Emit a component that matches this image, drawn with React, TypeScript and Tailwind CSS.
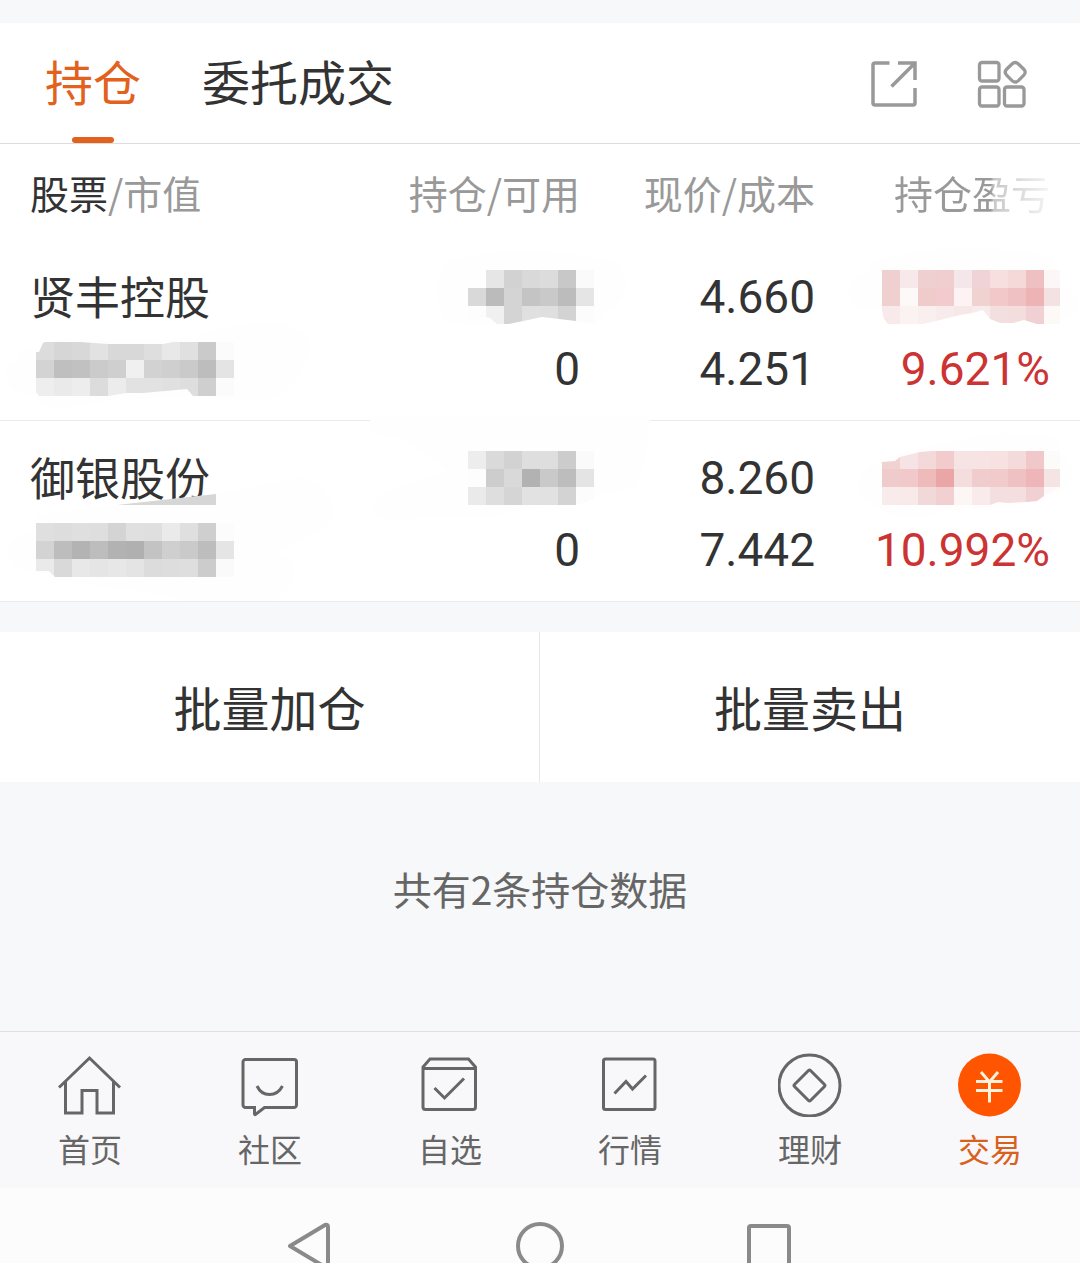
import clsx from "clsx";
import type { ReactNode } from "react";

type MosaicData = {
    cells: string[][];
    clip: string;
    halo: string;
    strip?: string;
};

type Holding = {
    name: string;
    price: string;
    cost: string;
    profit: string;
    value: MosaicData;
    amount: MosaicData;
    gain: MosaicData;
};

const grey = (row: string) => row.split(" ").map((c) => `#${c}${c}${c}`);
const tint = (row: string) => row.split(" ").map((c) => `#${c}`);

const holdings: Holding[] = [
    {
        name: "贤丰控股",
        price: "4.660",
        cost: "4.251",
        profit: "9.621%",
        value: {
            cells: [
                grey("dc d6 d8 e2 d8 d8 de e8 e0 ca fb"),
                grey("d3 bf c1 cb cf f0 d2 cf ca bd e4"),
                grey("ee ea ed dc ec e2 e2 e0 de cf fb"),
            ],
            clip: "0,10 3,10 7,1 9,0 44,0 72,2 127,2 137,0 198,0 198,54 157,54 151,47 107,51 91,51 72,54 3,54 0,50",
            halo: "M-18 10Q-10 4 0 10Q20 -8 50 -2L150 -2Q200 -22 248 -18Q290 -6 264 30Q250 64 200 58L150 54L60 60Q10 74 0 54Q-30 52 -30 32Q-30 20 -18 22Z",
        },
        amount: {
            cells: [
                grey("fe e6 d2 d9 dc c8 fa"),
                grey("d9 bb d4 c4 c9 bc e5"),
                grey("fd f0 d4 e0 df d3 fc"),
            ],
            clip: "0,0 126,0 126,54 108,51 74,47 41,54 29,54 22,48 18,47 0,50",
            halo: "M-20 -10Q60 -28 150 -8Q170 24 140 40L128 54L74 47L30 56L-24 52Q-40 10 -20 -10Z",
        },
        gain: {
            cells: [
                tint("efcfcf f7e8e9 f0cfd0 f0cdcf f5e6e9 f0d3d7 f7dfe0 f5d9d9 efc0c1 fcf7f6"),
                tint("f0cfcf fdf9f8 f0cbcc f1cbcd fdf3f4 f0d2d0 f2c8c9 f0c1c2 eeb3b5 f3e2e1"),
                tint("f8eaea fbf2f2 f9efef f8ebec f7e8e8 f8ebec f4dfe0 f4dddd f1d0d3 fcf9f7"),
            ],
            clip: "0,0 178,0 178,54 155,54 142,50 131,53 118,53 108,49 101,40 90,43 78,45 58,50 41,54 6,54 2,49 0,40",
            halo: "M-12 -6Q60 -34 168 -14L180 18Q200 20 196 40Q186 54 164 50L0 40Q-36 42 -34 18Q-30 4 -12 4Z",
        },
    },
    {
        name: "御银股份",
        price: "8.260",
        cost: "7.442",
        profit: "10.992%",
        value: {
            cells: [
                grey("df dd df de d4 e0 df ea df cf fc"),
                grey("d3 bd b3 bd b2 b0 c3 cf ca bd e5"),
                grey("ea d9 e8 e5 e7 e4 dc dd de cc fa"),
            ],
            clip: "0,0 198,0 198,54 19,54 13,48 0,48",
            halo: "M0 -8L180 -29L262 -45Q300 -40 296 0L240 30Q270 40 250 66Q244 76 236 78L150 78L140 74L20 56L0 50Q-30 46 -28 24Q-20 10 0 8Z",
            strip: "81,-18 180,-29 180,-18",
        },
        amount: {
            cells: [
                grey("ed da d2 de de cc fa"),
                grey("fd cd d9 b2 c9 bd e4"),
                grey("ea de d5 e2 e1 d3 fc"),
            ],
            clip: "0,0 126,0 126,48 108,54 0,54",
            halo: "M-98 -36L182 -36L180 -10L170 36L20 66L-80 68Q-110 60 -80 40L-20 20L-60 -10L-98 -18Z",
        },
        gain: {
            cells: [
                tint("f0d2d0 f6e3e6 f3d9d9 f2cbcd f6e3e3 f7e3e3 f7e1e1 f3dbdc f0c8ca fdfbfa"),
                tint("f0cbcb f2c9ca eebaba eaa5a7 f3dddd f1cccd f1cacb f0c1c2 eeb6b8 f4e4e4"),
                tint("f8ebeb f9eaea f1d9da f2cfd1 fcf7f4 f9ebeb f4dee0 f4dedf f1d0d3 fcf9f8"),
            ],
            clip: "0,11 13,10 18,6 38,1 50,0 178,0 178,36 162,45 155,50 145,51 126,52 116,51 108,54 0,54",
            halo: "M0 8Q70 -12 120 -18L174 -14L180 4Q200 20 180 40L140 54L60 60Q20 74 -6 56Q-30 44 -22 26Q-14 12 0 10Z",
        },
    },
];

function Mosaic({ id, data, width }: { id: string; data: MosaicData; width: number }) {
    return (
        <svg width={width} height="54" className="block shrink-0 overflow-visible" aria-hidden="true">
            <clipPath id={id}>
                <polygon points={data.clip} />
            </clipPath>
            <path d={data.halo} fill="#fefefe" />
            {data.strip && <polygon points={data.strip} fill="#d6d6d6" />}
            <g clipPath={`url(#${id})`} shapeRendering="crispEdges">
                {data.cells.map((row, y) =>
                    row.map((fill, x) => (
                        <rect key={`${x}-${y}`} x={x * 18} y={y * 18} width="18" height="18" fill={fill} />
                    ))
                )}
            </g>
        </svg>
    );
}

function Line({ children, right }: { children: ReactNode; right?: boolean }) {
    return <div className={clsx("h-[72px] flex items-center", right && "justify-end")}>{children}</div>;
}

const navItems = [
    {
        label: "首页",
        icon: (
            <>
                <path d="M1 34.5 31.5 5 62 34.5" />
                <path d="M7.5 29V60H24V37.5H39V60H55.5V29" />
            </>
        ),
    },
    {
        label: "社区",
        icon: (
            <>
                <path d="M7.5 6.5H56a2.5 2.5 0 0 1 2.5 2.5V52a2.5 2.5 0 0 1-2.5 2.5H26.5L17.5 61.5Q16.5 62 16.5 60.5V54.5H7.5A2.5 2.5 0 0 1 5 52V9a2.5 2.5 0 0 1 2.5-2.5Z" />
                <path d="M19 33Q23 41.5 31.5 41.5T44.5 33" />
            </>
        ),
    },
    {
        label: "自选",
        icon: (
            <>
                <path d="M12 6H50.5L57.5 14V54a2.5 2.5 0 0 1-2.5 2.5H7.5A2.5 2.5 0 0 1 5 54V14Z" />
                <path d="M5 15.5H57.5M16.5 35 26.5 45 46 25.5" />
            </>
        ),
    },
    {
        label: "行情",
        icon: (
            <>
                <rect x="5.5" y="6" width="51.5" height="50.5" rx="2" />
                <path d="M16.5 40.5 28 28.5 34.5 36 48 22.5" />
            </>
        ),
    },
    {
        label: "理财",
        icon: (
            <>
                <circle cx="31.5" cy="32.5" r="30.5" />
                <path d="M30.5 17.5Q31.5 16.5 32.5 17.5L46.5 31.5Q47.5 32.5 46.5 33.5L32.5 47.5Q31.5 48.5 30.5 47.5L16.5 33.5Q15.5 32.5 16.5 31.5Z" />
            </>
        ),
    },
    {
        label: "交易",
        active: true,
        icon: (
            <>
                <circle cx="31.5" cy="32" r="31.5" fill="#ff5500" stroke="none" />
                <path d="M23 19 31.5 29 40 19M31.5 29V49.5M18 28.5H44.5M18 37.5H44.5" stroke="#fff1dc" />
            </>
        ),
    },
];

function Header() {
    return (
        <header className="h-[121px] shrink-0 bg-white border-b border-[#dddddd] flex items-stretch justify-between pl-[45px] pr-[52px]">
            <nav className="flex gap-[61px] text-5xl">
                <button className="flex flex-col items-center text-[#e2611c]">
                    <span className="flex-1 flex items-center">持仓</span>
                    <span className="w-[42px] h-1.5 rounded-full bg-[#e2611c]" />
                </button>
                <button className="flex flex-col items-center text-[#333333]">
                    <span className="flex-1 flex items-center">委托成交</span>
                    <span className="h-1.5" />
                </button>
            </nav>
            <div className="flex items-center gap-[58px] pt-0.5 text-[#999999]">
                <button aria-label="分享">
                    <svg width="48" height="48" fill="none" stroke="currentColor" strokeWidth="3.5">
                        <path d="M19.5 3H5Q3 3 3 5V43Q3 45 5 45H43Q45 45 45 43V28M28 3H45V20M21.5 26.5 44 4" />
                    </svg>
                </button>
                <button aria-label="更多">
                    <svg width="52" height="52" fill="none" stroke="currentColor" strokeWidth="3.3">
                        <rect x="3.5" y="4.5" width="19.5" height="18.5" rx="2.5" />
                        <rect x="3.5" y="29" width="19.5" height="19" rx="2.5" />
                        <rect x="28.5" y="29" width="19.5" height="19" rx="2.5" />
                        <path d="M36 6Q39.2 3 42.4 6L47.6 11Q50.8 14.2 47.6 17.4L42.4 22.6Q39.2 25.6 36 22.6L30.8 17.4Q27.6 14.2 30.8 11Z" />
                    </svg>
                </button>
            </div>
        </header>
    );
}

function HoldingsTable() {
    return (
        <table className="w-full table-fixed border-separate border-spacing-0 bg-white text-[#333333]">
            <thead className="text-[39px] leading-none text-[#999999]">
                <tr className="h-24 text-right">
                    <th className="pl-[30px] text-left font-normal">
                        <span className="text-[#333333]">股票</span>/市值
                    </th>
                    <th className="w-[235px] font-normal">持仓/可用</th>
                    <th className="w-[235px] font-normal">现价/成本</th>
                    <th className="w-[265px] pr-[30px] font-normal">
                        <span className="bg-clip-text text-transparent bg-linear-to-r from-[#999999] from-62% via-[#c8c8c8] via-64% to-[#f4f4f4]">
                            持仓盈亏
                        </span>
                    </th>
                </tr>
            </thead>
            <tbody className="font-[Roboto] text-[46px] leading-none">
                {holdings.map((item, i) => (
                    <tr key={item.name}>
                        <td className="border-b border-[#ebebeb] pt-[21px] pb-[15px] pl-[30px]">
                            <div className="h-[72px] flex items-center pb-1">
                                <span className="font-['Noto_Sans_CJK_SC',sans-serif] text-[45px]">{item.name}</span>
                            </div>
                            <div className="h-[72px] flex items-center pl-1.5">
                                <Mosaic id={`value-${i}`} data={item.value} width={198} />
                            </div>
                        </td>
                        <td className="border-b border-[#ebebeb] pt-[21px] pb-[15px]">
                            <Line right>
                                <Mosaic id={`amount-${i}`} data={item.amount} width={112} />
                            </Line>
                            <Line right>0</Line>
                        </td>
                        <td className="border-b border-[#ebebeb] pt-[21px] pb-[15px]">
                            <Line right>{item.price}</Line>
                            <Line right>{item.cost}</Line>
                        </td>
                        <td className="border-b border-[#ebebeb] pt-[21px] pb-[15px] pr-[30px]">
                            <Line right>
                                <Mosaic id={`gain-${i}`} data={item.gain} width={168} />
                            </Line>
                            <Line right>
                                <span className="text-[#cc3333]">{item.profit}</span>
                            </Line>
                        </td>
                    </tr>
                ))}
            </tbody>
        </table>
    );
}

export default function App() {
    return (
        <div className="min-h-screen flex flex-col overflow-hidden bg-[#f7f8fa] pt-[23px] font-['Noto_Sans_CJK_SC',sans-serif]">
            <Header />
            <HoldingsTable />
            <div className="mt-[30px] h-[150px] shrink-0 grid grid-cols-2 bg-white text-5xl text-[#333333]">
                <button className="border-r border-[#e8e8e8] pb-0.5">批量加仓</button>
                <button className="pb-0.5">批量卖出</button>
            </div>
            <main className="flex-1 flex justify-center pt-[78px] pb-[85px]">
                <p className="text-[39px] leading-[56px] text-[#666666]">共有2条持仓数据</p>
            </main>
            <nav className="h-[157px] shrink-0 grid grid-cols-6 border-t border-[#e0e1e3] bg-[#f8f8fa]">
                {navItems.map((item) => (
                    <a
                        key={item.label}
                        href="#"
                        className={clsx(
                            "flex flex-col items-center pt-[21px] text-[32px] leading-[62px]",
                            item.active ? "text-[#d9611e]" : "text-[#666666]"
                        )}
                    >
                        <svg width="64" height="64" fill="none" stroke="currentColor" strokeWidth="3" aria-hidden="true">
                            {item.icon}
                        </svg>
                        {item.label}
                    </a>
                ))}
            </nav>
            <footer className="h-[75px] shrink-0 overflow-hidden flex justify-center gap-[182px] bg-[#fcfcfc] pt-[34px] text-[#8a8a8a]">
                <button aria-label="返回" className="h-12">
                    <svg width="48" height="48" fill="none" stroke="currentColor" strokeWidth="4" strokeLinejoin="round">
                        <path d="M4 24 39 3Q42 2 42 5V43Q42 46 39 45Z" />
                    </svg>
                </button>
                <button aria-label="主屏幕" className="h-12">
                    <svg width="48" height="48" fill="none" stroke="currentColor" strokeWidth="4">
                        <circle cx="24" cy="24" r="22" />
                    </svg>
                </button>
                <button aria-label="最近任务" className="h-12">
                    <svg width="48" height="48" fill="none" stroke="currentColor" strokeWidth="4">
                        <rect x="3" y="4" width="40" height="42" rx="2" />
                    </svg>
                </button>
            </footer>
        </div>
    );
}
